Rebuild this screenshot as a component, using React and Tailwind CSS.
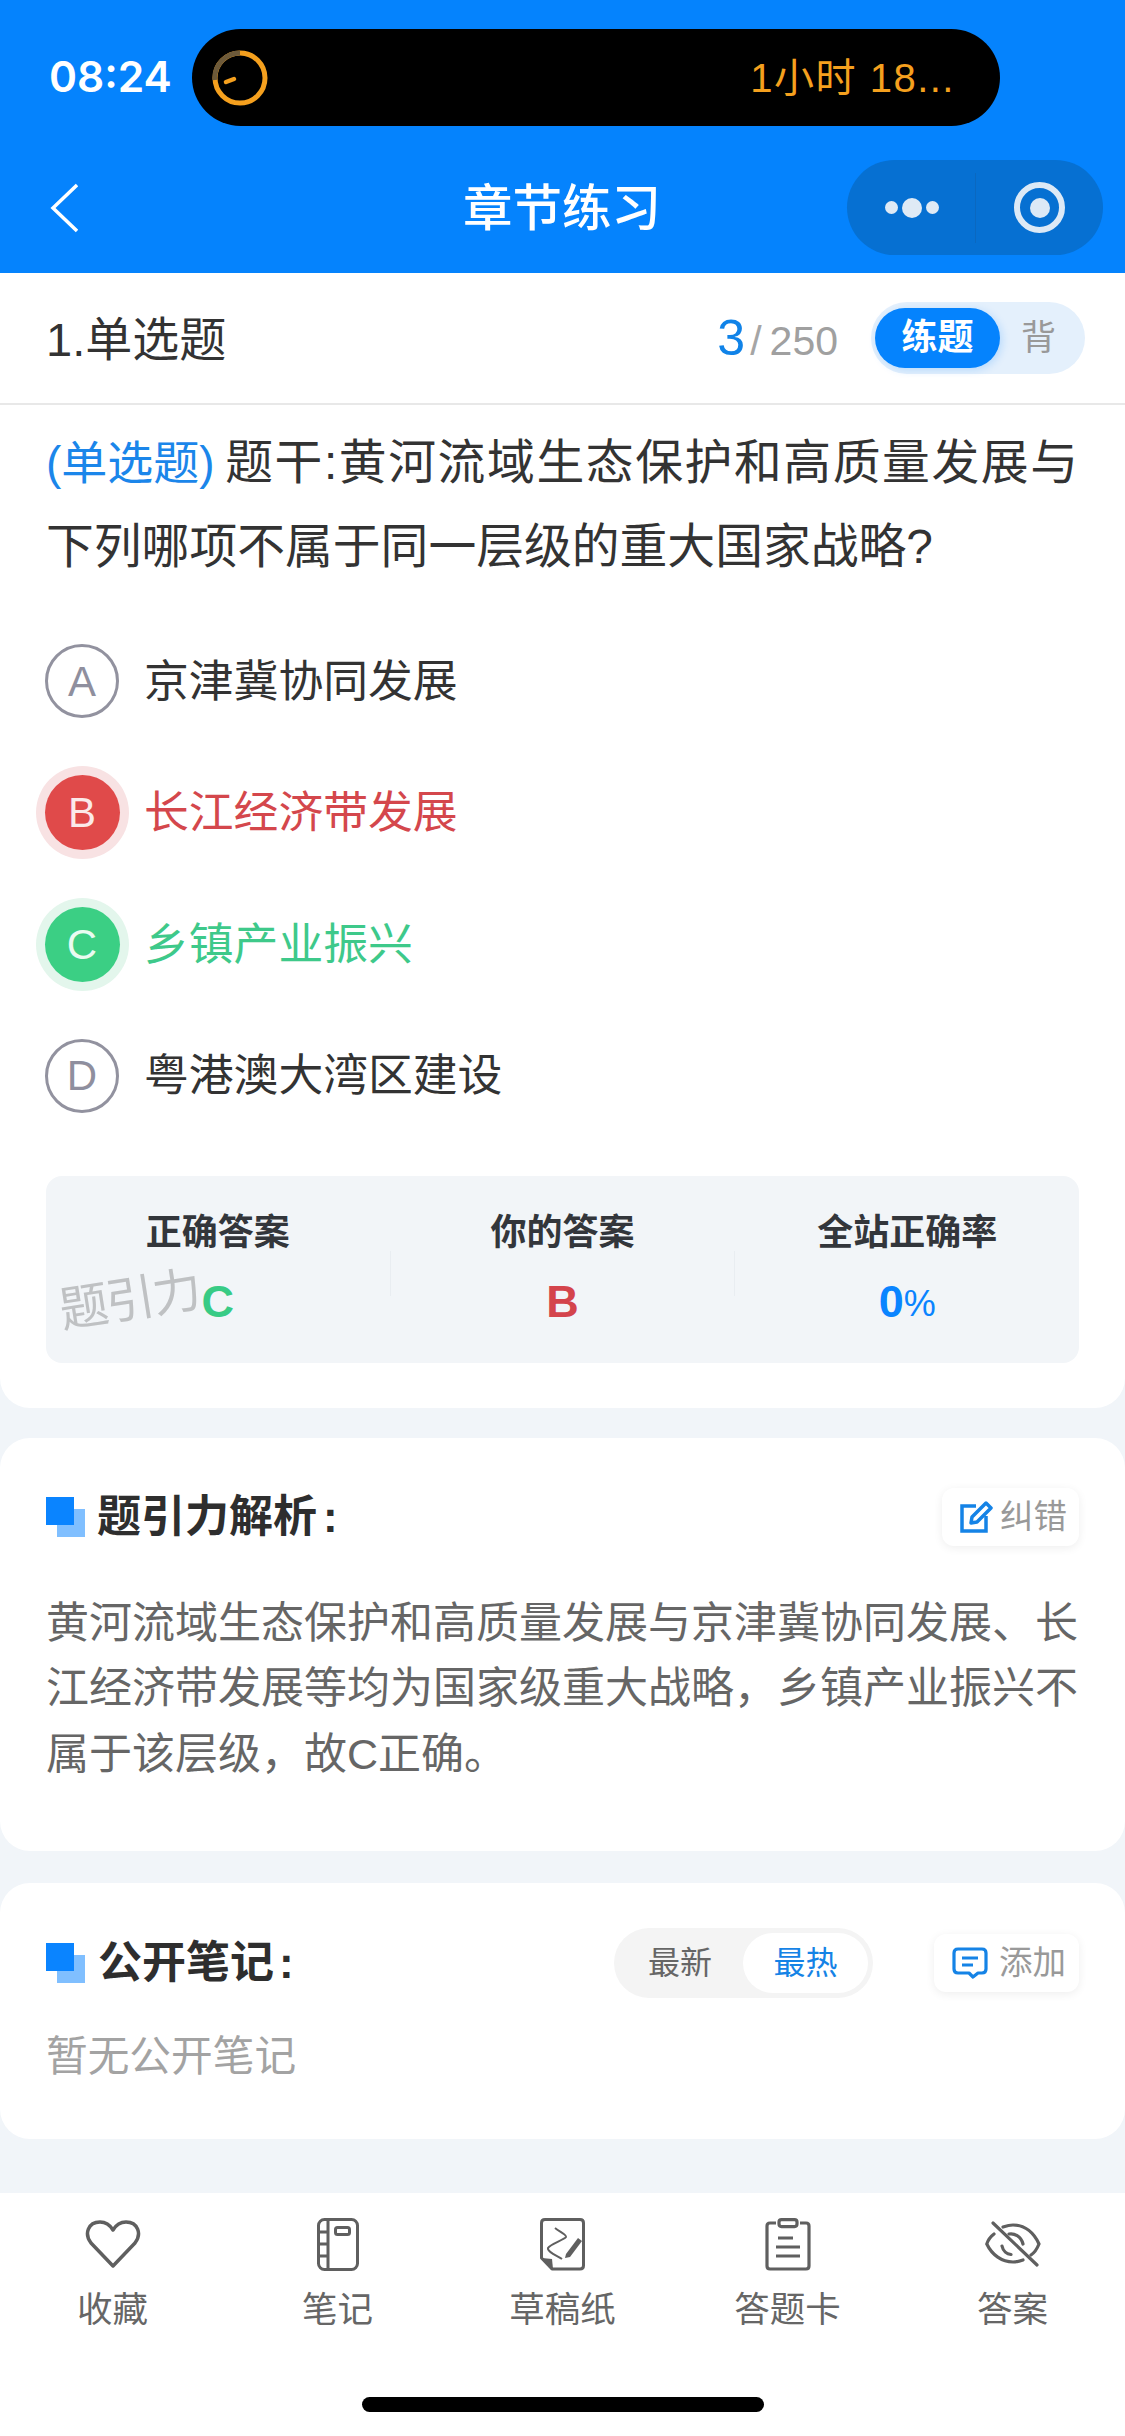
import React from "react";

const FONT = "font-['Liberation_Sans','Noto_Sans_CJK_SC',sans-serif]";

const Ring = () => (
  <svg width="56" height="56" viewBox="0 0 56 56" fill="none">
    <circle cx="28" cy="28" r="25" stroke="#f5a01e" strokeWidth="5" />
    <path d="M28 3 A25 25 0 0 0 3 30" stroke="#6d5a3a" strokeWidth="5" />
    <path d="M14 32 L22 29" stroke="#f5a01e" strokeWidth="4.500" strokeLinecap="round" />
  </svg>
);

const Chevron = () => (
  <svg width="28" height="50" viewBox="0 0 28 50" fill="none">
    <path d="M27 2 L3 25 L27 48" stroke="#fff" strokeWidth="3.500" />
  </svg>
);

const Option = ({ letter, text, state }) => {
  let circle = "w-[74px] h-[74px] border-[3px] border-[#92929f] text-[#8f8f9e]";
  let label = "text-[#333]";
  if (state === "wrong") {
    circle = "w-[75px] h-[75px] bg-[#e04a4a] text-[#fbe9e9] ring-[9px] ring-[#f8e2e3]";
    label = "text-[#d4474c]";
  }
  if (state === "right") {
    circle = "w-[75px] h-[75px] bg-[#3bcf84] text-[#e9fbf1] ring-[9px] ring-[#e3f6ec]";
    label = "text-[#3ec98a]";
  }
  return (
    <div className="flex items-center h-[92px]">
      <div className="w-[74px] flex justify-center">
        <div className={`${circle} shrink-0 rounded-full flex items-center justify-center text-[42px]`}>{letter}</div>
      </div>
      <div className={`ml-[25px] text-[44.800px] leading-none ${label}`}>{text}</div>
    </div>
  );
};

const Stat = ({ title, children }) => (
  <div className="flex-1 flex flex-col items-center">
    <div className="text-[36px] leading-[48px] font-bold text-[#33363b]">{title}</div>
    <div className="mt-[21px] h-[48px] flex items-center font-bold text-[45px] leading-none">{children}</div>
  </div>
);

const SectionMark = () => (
  <div className="relative w-[39px] h-[40px] shrink-0">
    <div className="absolute right-0 bottom-0 w-[28px] h-[28px] bg-[#80bfff]" />
    <div className="absolute left-0 top-0 w-[28px] h-[28px] bg-[#0a84ff]" />
  </div>
);

const Heart = () => (
  <svg width="56" height="50" viewBox="0 0 56 50" fill="none">
    <path d="M28 47 L6 24 C-1 15 3 3 15 3 C21 3 25 6 28 11 C31 6 35 3 41 3 C53 3 57 15 50 24 Z" stroke="#5f5f5f" strokeWidth="3.5" strokeLinejoin="round" />
  </svg>
);

const Notebook = () => (
  <svg width="42" height="53" viewBox="0 0 42 53" fill="none" stroke="#5f5f5f" strokeWidth="3">
    <rect x="1.5" y="1.5" width="39" height="50" rx="6" />
    <path d="M11 2 V51 M2 14 H11 M2 26 H11 M2 38 H11" />
    <rect x="18.5" y="9.5" width="14" height="7" rx="2" />
  </svg>
);

const Draft = () => (
  <svg width="45" height="53" viewBox="0 0 45 53" fill="none">
    <path d="M12 51 H40 Q43.500 51 43.500 47.500 V5 Q43.500 1.500 40 1.500 H5 Q1.500 1.500 1.500 5 V40 Z" stroke="#5f5f5f" strokeWidth="3" strokeLinejoin="round" />
    <path d="M2 40 L12 41 L13 51 Z" fill="#5f5f5f" />
    <path d="M15 10 C20 14 27 17 26 19 C24 22 10 26 8 30 C7 34 18 38 22 41" stroke="#5f5f5f" strokeWidth="2" strokeLinejoin="round" />
    <path d="M26 36 L38 20 L42 23 L30 39 L25 40 Z" fill="#5f5f5f" />
  </svg>
);

const Clipboard = () => (
  <svg width="46" height="53" viewBox="0 0 46 53" fill="none" stroke="#5f5f5f" strokeWidth="3.2">
    <path d="M11 5 H5 Q2 5 2 8 V48 Q2 51 5 51 H41 Q44 51 44 48 V8 Q44 5 41 5 H35" />
    <rect x="14" y="1.600" width="18" height="7" rx="2.500" />
    <path d="M13 20 H28 M11 29 H35 M11 38 H35" />
  </svg>
);

const EyeOff = () => (
  <svg width="56" height="46" viewBox="0 0 56 46" fill="none" stroke="#5f5f5f" strokeWidth="3.2" strokeLinecap="round">
    <path d="M9 13 C5 16 3 19 1.800 23 C7 34 17 41 28 41 C32 41 35 40 38 39" />
    <path d="M18 6 C21 5 25 4 28 4 C40 4 49 12 54 23 C52 28 49 32 46 34" />
    <path d="M17 25 C18 30 22 33 26 33.500 M24 13 C29 12 36 15 38 23" />
    <path d="M8 2 L52 44" />
  </svg>
);

const tools = [
  { icon: <Heart />, label: "收藏" },
  { icon: <Notebook />, label: "笔记" },
  { icon: <Draft />, label: "草稿纸" },
  { icon: <Clipboard />, label: "答题卡" },
  { icon: <EyeOff />, label: "答案" },
];

const App = () => {
  return (
    <div className={`${FONT} w-[1125px] h-[2436px] overflow-hidden bg-[#f1f5f9]`}>
      {/* header */}
      <div className="h-[273px] bg-[#0583fd] pt-[29px]">
        <div className="flex items-center h-[97px] pl-[49px]">
          <div className="w-[143px] font-['Inter',sans-serif] text-[42.500px] font-semibold text-white leading-none">08:24</div>
          <div className="w-[808px] h-[97px] rounded-full bg-black flex items-center justify-between pl-[20px] pr-[45px]">
            <Ring />
            <div className="text-[40px] leading-none text-[#f5a01e] tracking-[1.500px]">1小时 18...</div>
          </div>
        </div>
        <div className="mt-[34px] flex items-center pl-[50px] pr-[22px]">
          <Chevron />
          <div className="ml-[385px] text-[49.500px] font-medium leading-none text-white pt-[2px]">章节练习</div>
          <div className="ml-auto w-[256px] h-[95px] rounded-full bg-[#0670d2] flex items-center">
            <div className="w-[129px] h-[70px] border-r border-[#0a68c0] flex items-center justify-center gap-[4px] pl-[2px]">
              <div className="w-[13px] h-[13px] rounded-full bg-[#dfeaf5]" />
              <div className="w-[20px] h-[20px] rounded-full bg-[#dfeaf5]" />
              <div className="w-[13px] h-[13px] rounded-full bg-[#dfeaf5]" />
            </div>
            <div className="flex-1 flex items-center justify-center">
              <div className="w-[51px] h-[51px] rounded-full border-[6px] border-[#dce9f6] flex items-center justify-center">
                <div className="w-[20px] h-[20px] rounded-full bg-[#dce9f6]" />
              </div>
            </div>
          </div>
        </div>
      </div>

      {/* question */}
      <div className="bg-white rounded-b-[30px] pb-[45px]">
        <div className="h-[132px] border-b-2 border-[#e8e8e8] flex items-center pl-[46px] pr-[40px]">
          <div className="text-[47px] leading-none text-[#333] pt-[2px]">1.单选题</div>
          <div className="ml-auto flex items-baseline">
            <span className="text-[50px] leading-none text-[#1083e8]">3</span>
            <span className="text-[41px] leading-none text-[#a5a5a5] ml-[5px]">/</span>
            <span className="text-[41px] leading-none text-[#a0a0a0] ml-[8px]">250</span>
          </div>
          <div className="ml-[33px] w-[214px] h-[72px] rounded-full bg-[#e4f0fc] flex items-center pl-[4px]">
            <div className="w-[125px] h-[60px] rounded-full bg-[#0583fd] text-white text-[36px] font-bold flex items-center justify-center shadow-[2px_2px_8px_rgba(5,131,253,0.2)]">练题</div>
            <div className="flex-1 text-center text-[35px] text-[#999] pr-[8px]">背</div>
          </div>
        </div>
        <div className="pt-[16px] pl-[46px] pr-[47px] text-[47.800px] leading-[84px] text-[#333] text-justify">
          <span className="inline-block text-[46px] text-[#1b86ea] mr-[9px]">(单选题)</span>题干:黄河流域生态保护和高质量发展与下列哪项不属于同一层级的重大国家战略?
        </div>
        <div className="mt-[46px] pl-[45px] flex flex-col gap-[39.5px]">
          <Option letter="A" text="京津冀协同发展" />
          <Option letter="B" text="长江经济带发展" state="wrong" />
          <Option letter="C" text="乡镇产业振兴" state="right" />
          <Option letter="D" text="粤港澳大湾区建设" />
        </div>
        <div className="relative mt-[54px] mx-[46px] h-[187px] bg-[#f2f5f8] rounded-[16px] pt-[33px] flex">
          <Stat title="正确答案"><span className="text-[#38cb85]">C</span></Stat>
          <div className="w-px h-[45px] mt-[42px] bg-[#e9edf1]" />
          <Stat title="你的答案"><span className="text-[#d4444c]">B</span></Stat>
          <div className="w-px h-[45px] mt-[42px] bg-[#e9edf1]" />
          <Stat title="全站正确率">
            <span className="text-[#0a84ff]">0</span>
            <span className="text-[#0a84ff] text-[36px] font-normal mt-[5px]">%</span>
          </Stat>
          <div className="absolute left-[13px] top-[100px] -rotate-[9deg] text-[49px] leading-none font-normal text-[#bfc1c3] tracking-[-2px]">题引力</div>
        </div>
      </div>

      {/* analysis */}
      <div className="mt-[30px] bg-white rounded-[30px] h-[413px] pt-[50px] px-[46px]">
        <div className="flex items-center h-[58px]">
          <SectionMark />
          <div className="ml-[12px] text-[44px] font-bold leading-none text-[#2e2e2e]">题引力解析<span className="ml-[6px]">:</span></div>
          <div className="ml-auto w-[137px] h-[58px] rounded-[12px] bg-white shadow-[0_2px_10px_rgba(0,0,0,0.07)] flex items-center justify-center gap-[7px] pl-[5px]">
            <svg width="34" height="34" viewBox="0 0 34 34" fill="none" stroke="#1583e6" strokeWidth="3.5">
              <path d="M17 6 H3 V31 H27 V16" />
              <path d="M12 23 L13 17 L27 3 L32 8 L18 22 Z" strokeLinejoin="round" />
            </svg>
            <span className="text-[33.500px] leading-none text-[#999]">纠错</span>
          </div>
        </div>
        <div className="mt-[45px] text-[43px] leading-[65.5px] text-[#666]">
          黄河流域生态保护和高质量发展与京津冀协同发展、长江经济带发展等均为国家级重大战略，乡镇产业振兴不属于该层级，故C正确。
        </div>
      </div>

      {/* notes */}
      <div className="mt-[32px] bg-white rounded-[30px] h-[256px] pt-[45px] px-[46px]">
        <div className="flex items-center h-[70px]">
          <SectionMark />
          <div className="ml-[13px] text-[44px] font-bold leading-none text-[#2e2e2e]">公开笔记<span className="ml-[5px]">:</span></div>
          <div className="ml-auto w-[259px] h-[70px] rounded-full bg-[#f4f4f4] flex items-center pl-[3px] text-[32px]">
            <div className="w-[126px] text-center text-[#666]">最新</div>
            <div className="w-[125px] h-[60px] rounded-full bg-white text-[#1583e6] flex items-center justify-center">最热</div>
          </div>
          <div className="ml-[61px] w-[145px] h-[58px] rounded-[12px] bg-white shadow-[0_2px_10px_rgba(0,0,0,0.07)] flex items-center justify-center gap-[11px] pl-[5px]">
            <svg width="36" height="32" viewBox="0 0 36 32" fill="none" stroke="#1583e6" strokeWidth="3.2">
              <path d="M6 2 H30 Q34 2 34 6 V22 Q34 26 30 26 H26 L21 30 L17 26 H6 Q2 26 2 22 V6 Q2 2 6 2 Z" strokeLinejoin="round" />
              <path d="M10 11 H26 M10 18 H21" />
            </svg>
            <span className="text-[33.500px] leading-none text-[#999]">添加</span>
          </div>
        </div>
        <div className="mt-[29px] text-[41.700px] leading-[60px] text-[#a3a3a3]">暂无公开笔记</div>
      </div>

      {/* bottom bar */}
      <div className="mt-[54px] bg-white h-[243px] pt-[25px]">
        <div className="grid grid-cols-5">
          {tools.map((t) => (
            <div key={t.label} className="flex flex-col items-center">
              <div className="h-[53px] flex items-center justify-center">{t.icon}</div>
              <div className="mt-[14px] text-[35.500px] leading-[50px] text-[#666]">{t.label}</div>
            </div>
          ))}
        </div>
        <div className="mt-[62px] mx-auto w-[402px] h-[15px] rounded-full bg-black" />
      </div>
    </div>
  );
};

export default App;
